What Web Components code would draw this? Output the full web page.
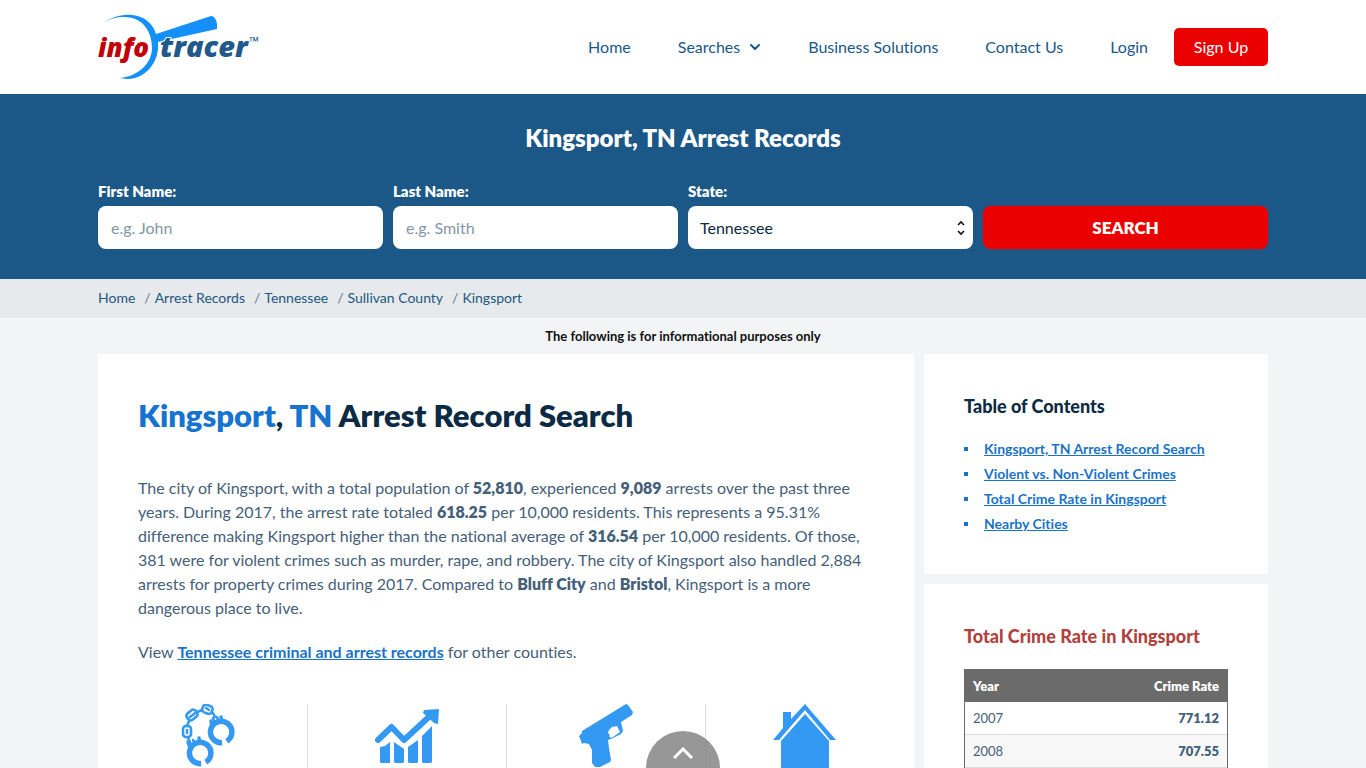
<!DOCTYPE html>
<html lang="en">
<head>
<meta charset="utf-8">
<meta name="viewport" content="width=device-width, initial-scale=1">
<title>Kingsport, TN Arrest Records</title>
<style>
html { scrollbar-width: none; }
body {
  margin: 0; min-height: 100vh;
  font-family: Lato, "Liberation Sans", sans-serif;
  font-size: 16px; line-height: 24px; font-variant-ligatures: none;
  background: #f2f4f6; color: #456079;
  --page: 1170px; --blue: #1b5888; --link: #1a73c8; --icon: #3399f3; --red: #eb0000; --ink: #0b2a43;
}
</style>
</head>
<body>
<it-header></it-header>
<it-search></it-search>
<it-crumbs></it-crumbs>
<it-layout>
  <it-article></it-article>
  <it-card slot="side" heading="Table of Contents"><it-toc></it-toc></it-card>
  <it-card slot="side" heading="Total Crime Rate in Kingsport" tone="alert"><it-rates></it-rates></it-card>
</it-layout>
<it-top></it-top>

<script>
const define = (name, html) => customElements.define(name, class extends HTMLElement {
  constructor() {
    super();
    const t = document.createElement('template');
    t.innerHTML = '<style>*{box-sizing:border-box}:host{display:block}</style>' + html;
    this.attachShadow({ mode: 'open' }).append(t.content.cloneNode(true));
  }
  connectedCallback() {
    for (const el of this.shadowRoot.querySelectorAll('[data-attr]'))
      el.textContent = this.getAttribute(el.dataset.attr) || '';
  }
});

define('it-logo', `
<style>
:host { display: block; }
svg { display: block; }
text { font-family: "Open Sans", "Noto Sans", sans-serif; font-style: italic; font-weight: 800; }
</style>
<svg width="170" height="72" viewBox="0 0 170 72" role="img" aria-label="infotracer">
  <path fill="#1590fa" d="M7 11C20 2 36 2 45 7c7 4 11 9 13 16L113 5c4 0 7 6 6 13L60 31c2 20-13 37-30 37l-9-1c18-1 33-14 33-30C54 22 46 6 26 6 18 6 12 8 7 11z"/>
  <text x="0" y="46" font-size="26" fill="#c20007">info</text>
  <text x="62" y="46" font-size="29" fill="#23598a" stroke="#fff" stroke-width="2" paint-order="stroke">tracer</text>
  <text x="151" y="35" font-size="13" fill="#23598a" style="font-weight:600">™</text>
</svg>`);

define('it-header', `
<style>
:host { background: #fff; }
.bar { max-width: var(--page); min-height: 94px; margin: 0 auto; display: flex; align-items: center; justify-content: space-between; }
nav { display: flex; align-items: center; gap: 47px; }
a { color: var(--blue); text-decoration: none; display: flex; align-items: center; gap: 9px; }
.end { display: flex; align-items: center; gap: 26px; }
button { font: inherit; color: #fff; background: var(--red); border: 0; border-radius: 5px; height: 38px; width: 94px; padding: 0; }
</style>
<header class="bar">
  <it-logo></it-logo>
  <nav>
    <a href="#">Home</a>
    <a href="#">Searches <svg width="12" height="8" viewBox="0 0 12 8"><path d="M2 2l4 4 4-4" fill="none" stroke="#1b5888" stroke-width="2" stroke-linecap="round" stroke-linejoin="round"/></svg></a>
    <a href="#">Business Solutions</a>
    <a href="#">Contact Us</a>
    <div class="end"><a href="#">Login</a><button type="button">Sign Up</button></div>
  </nav>
</header>`);

define('it-search', `
<style>
:host { background: var(--blue); color: #fff; }
section { max-width: var(--page); margin: 0 auto; padding: 28px 0 30px; }
h2 { margin: 0 0 27px; font-size: 24px; line-height: 32px; font-weight: 800; text-align: center; }
form { display: grid; grid-template-columns: repeat(4, 1fr); gap: 10px; align-items: end; }
label { display: block; font-size: 15px; line-height: 20px; font-weight: 800; margin-bottom: 5px; }
input, select, button { display: block; width: 100%; height: 43px; border: 0; border-radius: 8px; font: inherit; margin: 0; }
input { padding: 0 13px; background: #fff; color: var(--ink); }
input::placeholder { color: #8496a9; opacity: 1; }
select { appearance: none; background: #fff; color: var(--ink); padding: 0 12px; }
.pick { position: relative; }
.pick svg { position: absolute; right: 8px; top: 14px; pointer-events: none; }
button { background: var(--red); color: #fff; font-size: 17px; font-weight: 800; box-shadow: 0 0 2px #a5203a; }
</style>
<section>
  <h2>Kingsport, TN Arrest Records</h2>
  <form>
    <div><label for="first">First Name:</label><input id="first" placeholder="e.g. John"></div>
    <div><label for="last">Last Name:</label><input id="last" placeholder="e.g. Smith"></div>
    <div><label for="state">State:</label>
      <div class="pick"><select id="state"><option>Tennessee</option></select>
      <svg width="8" height="16" viewBox="0 0 8 16"><path d="M1 5l3-3 3 3M1 11l3 3 3-3" fill="none" stroke="#111" stroke-width="1.600"/></svg></div></div>
    <button type="button">SEARCH</button>
  </form>
</section>`);

define('it-crumbs', `
<style>
:host { background: #e6eaed; }
ol { max-width: var(--page); margin: 0 auto; padding: 9px 0 10px; list-style: none; display: flex; gap: 9px; font-size: 14px; line-height: 20px; }
li + li::before { content: "/"; color: #66798a; margin-right: 4px; }
a { color: #235780; text-decoration: none; }
</style>
<nav aria-label="Breadcrumb"><ol>
<li><a href="#">Home</a></li><li><a href="#">Arrest Records</a></li><li><a href="#">Tennessee</a></li><li><a href="#">Sullivan County</a></li><li><a href="#">Kingsport</a></li>
</ol></nav>`);

define('it-layout', `
<style>
:host { max-width: var(--page); margin: 0 auto; }
.note { margin: 0; padding: 8px 0; font-size: 13px; line-height: 20px; color: #111; text-align: center; font-weight: 700; }
.cols { display: grid; grid-template-columns: minmax(0, 816fr) minmax(0, 344fr); gap: 10px; }
aside { display: grid; gap: 10px; align-content: start; }
</style>
<p class="note">The following is for informational purposes only</p>
<div class="cols"><slot></slot><aside><slot name="side"></slot></aside></div>`);

define('it-card', `
<style>
:host { background: #fff; padding: 40px; }
h3 { margin: 0 0 20px; font-size: 18px; line-height: 25px; font-weight: 900; color: var(--ink); }
:host([tone=alert]) h3 { color: #b04240; }
:host([tone=alert]) { padding-bottom: 0; }
</style>
<h3 data-attr="heading"></h3><slot></slot>`);

define('it-toc', `
<style>
ul { margin: 0; padding: 0; list-style: none; display: grid; gap: 5px; font-size: 14px; line-height: 20px; font-weight: 700; }
li { display: flex; align-items: center; gap: 16px; }
li::before { content: ""; width: 4px; height: 4px; background: #1a73c8; }
a { color: var(--link); }
</style>
<ul><li><a href="#">Kingsport, TN Arrest Record Search</a></li><li><a href="#">Violent vs. Non-Violent Crimes</a></li><li><a href="#">Total Crime Rate in Kingsport</a></li><li><a href="#">Nearby Cities</a></li></ul>`);

define('it-rates', `
<style>
table { width: 100%; border-collapse: separate; border-spacing: 0; border: 1px solid #6b6b6b; border-bottom: 0; font-size: 13px; line-height: 20px; }
th, td { padding: 6px 8px; text-align: left; }
thead th { background: #6b6b6b; color: #fff; font-weight: 800; }
td { border-bottom: 1px solid #ddd; }
tbody tr:nth-child(even) { background: #f8f8f8; }
:is(th, td):last-child { text-align: right; font-weight: 800; }
</style>
<table><thead><tr><th scope="col">Year</th><th scope="col">Crime Rate</th></tr></thead>
<tbody><tr><td>2007</td><td>771.12</td></tr><tr><td>2008</td><td>707.55</td></tr></tbody></table>`);

define('it-article', `
<style>
:host { background: #fff; padding: 40px 40px 0; }
h1 { margin: 0 0 40px; font-size: 31px; line-height: 42px; font-weight: 800; color: var(--ink); }
h1 span { color: #1673cf; }
p { margin: 0 0 20px; }
b { font-weight: 800; }
a { color: var(--link); font-weight: 700; }
.stats { display: grid; grid-template-columns: repeat(4, 1fr); margin: 40px -30px 0; padding: 0; list-style: none; }
.stats li { display: flex; justify-content: center; }
.stats li + li { border-left: 1px solid #ddd; }
svg { display: block; fill: var(--icon); }
.line { fill: none; stroke: var(--icon); }
</style>
<h1><span>Kingsport</span>, <span>TN</span> Arrest Record Search</h1>
<p>The city of Kingsport, with a total population of <b>52,810</b>, experienced <b>9,089</b> arrests over the past three years. During 2017, the arrest rate totaled <b>618.25</b> per 10,000 residents. This represents a 95.31% difference making Kingsport higher than the national average of <b>316.54</b> per 10,000 residents. Of those, 381 were for violent crimes such as murder, rape, and robbery. The city of Kingsport also handled 2,884 arrests for property crimes during 2017. Compared to <b>Bluff City</b> and <b>Bristol</b>, Kingsport is a more dangerous place to live.</p>
<p>View <a href="#">Tennessee criminal and arrest records</a> for other counties.</p>
<ul class="stats">
<li><svg width="64" height="64" viewBox="0 0 64 64" aria-hidden="true">
  <g class="line" stroke-linecap="round">
    <path stroke-width="5.500" stroke-linecap="butt" d="M46.100 38.600A10.700 10.700 0 1 1 50.700 37.100M25.100 59.600A10.700 10.700 0 1 1 29.700 58.100"/>
    <g stroke-width="2.600">
      <rect x="26.500" y="1.500" width="10" height="8" rx="3" transform="rotate(20 32 5)"/>
      <rect x="10.500" y="7" width="11" height="8" rx="3" transform="rotate(-38 16 11)"/>
      <rect x="7" y="22" width="8" height="11" rx="3"/>
      <path d="M19 9l7-3M30 4l3 2M14 13l4-3M13 17l-2 5M11 26v3M37 9l2 4M12 34l2 4M37 14l1 3c1 2 4 1 4-1l-1-3M13 38l2 3c2 1 4 0 3-3l-1-2"/>
      <path stroke-width="3.500" d="M35 17l1 6M45 13l1 5M12 38l2 6M23 34l1 5"/>
    </g>
  </g></svg></li>
<li><svg width="64" height="64" viewBox="0 0 64 64" aria-hidden="true">
  <path class="line" stroke-width="6" stroke-linecap="round" stroke-linejoin="round" d="M3 36l13.500-13L29 36l27-25"/>
  <path d="M49 6l15-1-1 15-4-1-11-10zM5 43l5-1 5-4v21H6l-1-1zM19 38l10 7v13l-1 1h-8l-1-1zM33 43l10-7v22l-1 1h-8l-1-1zM47 32l10-10v36l-1 1h-8l-1-1z"/></svg></li>
<li><svg width="64" height="64" viewBox="0 0 64 64" aria-hidden="true">
  <path fill-rule="evenodd" d="M8 27L52 0l2 1 5 7-1 3-11 7 2 9-2 3-10 5-3 1 1 8 2 12-1 2-10 5h-5l-3-4V46l-3-6-5-1-2 1-1-3-2-5 3-3zM35 26l-1 3 2 2-1 1 2 2 2-1 7-5-3-6-5 1z"/></svg></li>
<li><svg width="64" height="64" viewBox="0 0 64 64" aria-hidden="true">
  <path d="M0 36L10 24V8h8v7L32 0l31 36h-6L32 6 6 36zM32 10l24 27v27H8V37z"/></svg></li>
</ul>`);

define('it-top', `
<style>
:host { position: fixed; left: 0; right: 0; bottom: 0; display: flex; justify-content: center; pointer-events: none; }
button { width: 74px; height: 37px; border: 0; border-radius: 37px 37px 0 0; background: rgba(128, 128, 128, .82); padding: 6px 0 0; display: grid; place-items: center; pointer-events: auto; }
svg { display: block; }
</style>
<button type="button" aria-label="Back to top"><svg width="20" height="12" viewBox="0 0 20 12"><path d="M1 11l9-9 9 9" fill="none" stroke="#fff" stroke-width="3"/></svg></button>`);
</script>
</body>
</html>
